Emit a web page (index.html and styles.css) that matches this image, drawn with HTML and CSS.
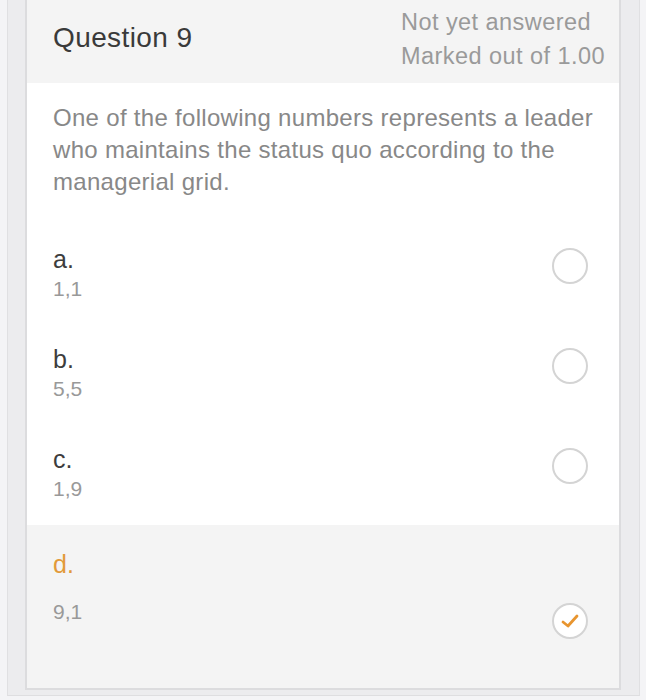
FILE: index.html
```html
<!DOCTYPE html>
<html>
<head>
<meta charset="utf-8">
<link rel="stylesheet" href="styles.css">
</head>
<body>
<div class="frame">
  <div class="card">
    <div class="head">
      <div class="qno">Question 9</div>
      <div class="state">
        <div>Not yet answered</div>
        <div>Marked out of 1.00</div>
      </div>
    </div>
    <div class="qtext">One of the following numbers represents a leader who maintains the status quo according to the managerial grid.</div>
    <div class="opt">
      <div class="lbl"><div class="letter">a.</div><div class="val">1,1</div></div>
      <span class="radio"></span>
    </div>
    <div class="opt">
      <div class="lbl"><div class="letter">b.</div><div class="val">5,5</div></div>
      <span class="radio"></span>
    </div>
    <div class="opt">
      <div class="lbl"><div class="letter">c.</div><div class="val">1,9</div></div>
      <span class="radio"></span>
    </div>
    <div class="opt sel">
      <div class="lbl"><div class="letter">d.</div><div class="val">9,1</div></div>
      <span class="radio checked"><svg width="20" height="16" viewBox="0 0 20 16"><path d="M3 9 L8 13 L17 3" fill="none" stroke="#e8952f" stroke-width="2.8" stroke-linecap="round" stroke-linejoin="round"/></svg></span>
    </div>
  </div>
</div>
</body>
</html>
```
FILE: styles.css
```css
html, body {
  margin: 0;
  padding: 0;
  background: #f4f4f6;
}
body {
  font-family: "Liberation Sans", Arial, sans-serif;
  width: 646px;
  height: 700px;
  overflow: hidden;
}
.frame {
  margin: 0 6px 0 7px;
  background: #ececee;
  border-left: 1px solid #e0e0e2;
  border-right: 1px solid #e0e0e2;
  border-bottom: 1px solid #dedee0;
  padding: 0 18px 5px 17px;
  height: 696px;
  box-sizing: border-box;
}
.card {
  background: #fff;
  border-left: 2px solid #dcdcde;
  border-right: 2px solid #dcdcde;
  border-bottom: 2px solid #dcdcde;
  height: 100%;
  box-sizing: border-box;
  display: flex;
  flex-direction: column;
}
.head {
  background: #f4f4f4;
  height: 83px;
  flex: none;
  display: flex;
  justify-content: space-between;
  padding: 0 0 0 26px;
}
.qno {
  font-size: 28px;
  color: #3a3a3a;
  margin-top: 22px;
  letter-spacing: 0.4px;
}
.state {
  width: 218px;
  font-size: 23.5px;
  letter-spacing: 0.45px;
  color: #9a9a9a;
  line-height: 34px;
  margin-top: 5px;
}
.qtext {
  padding: 19px 24px 0 26px;
  font-size: 24px;
  letter-spacing: 0.3px;
  line-height: 32px;
  color: #888;
  height: 142px;
  flex: none;
  box-sizing: border-box;
}
.opt {
  display: flex;
  justify-content: space-between;
  align-items: flex-start;
  padding: 20px 31px 0 26px;
  height: 100px;
  flex: none;
  box-sizing: border-box;
}
.opt.sel {
  background: #f4f4f4;
  flex: 1;
  height: auto;
  padding-top: 25px;
}
.letter {
  font-size: 25px;
  color: #3d3d3d;
  line-height: 29px;
}
.val {
  font-size: 21px;
  color: #999;
  line-height: 29px;
}
.sel .letter {
  color: #e29a3a;
}
.sel .val {
  margin-top: 18px;
}
.radio {
  width: 32px;
  height: 32px;
  margin-top: 3px;
  border: 2px solid #d4d4d4;
  border-radius: 50%;
  box-sizing: content-box;
  display: flex;
  align-items: center;
  justify-content: center;
  background: #fff;
}
.sel .radio {
  margin-top: 53px;
}
```
